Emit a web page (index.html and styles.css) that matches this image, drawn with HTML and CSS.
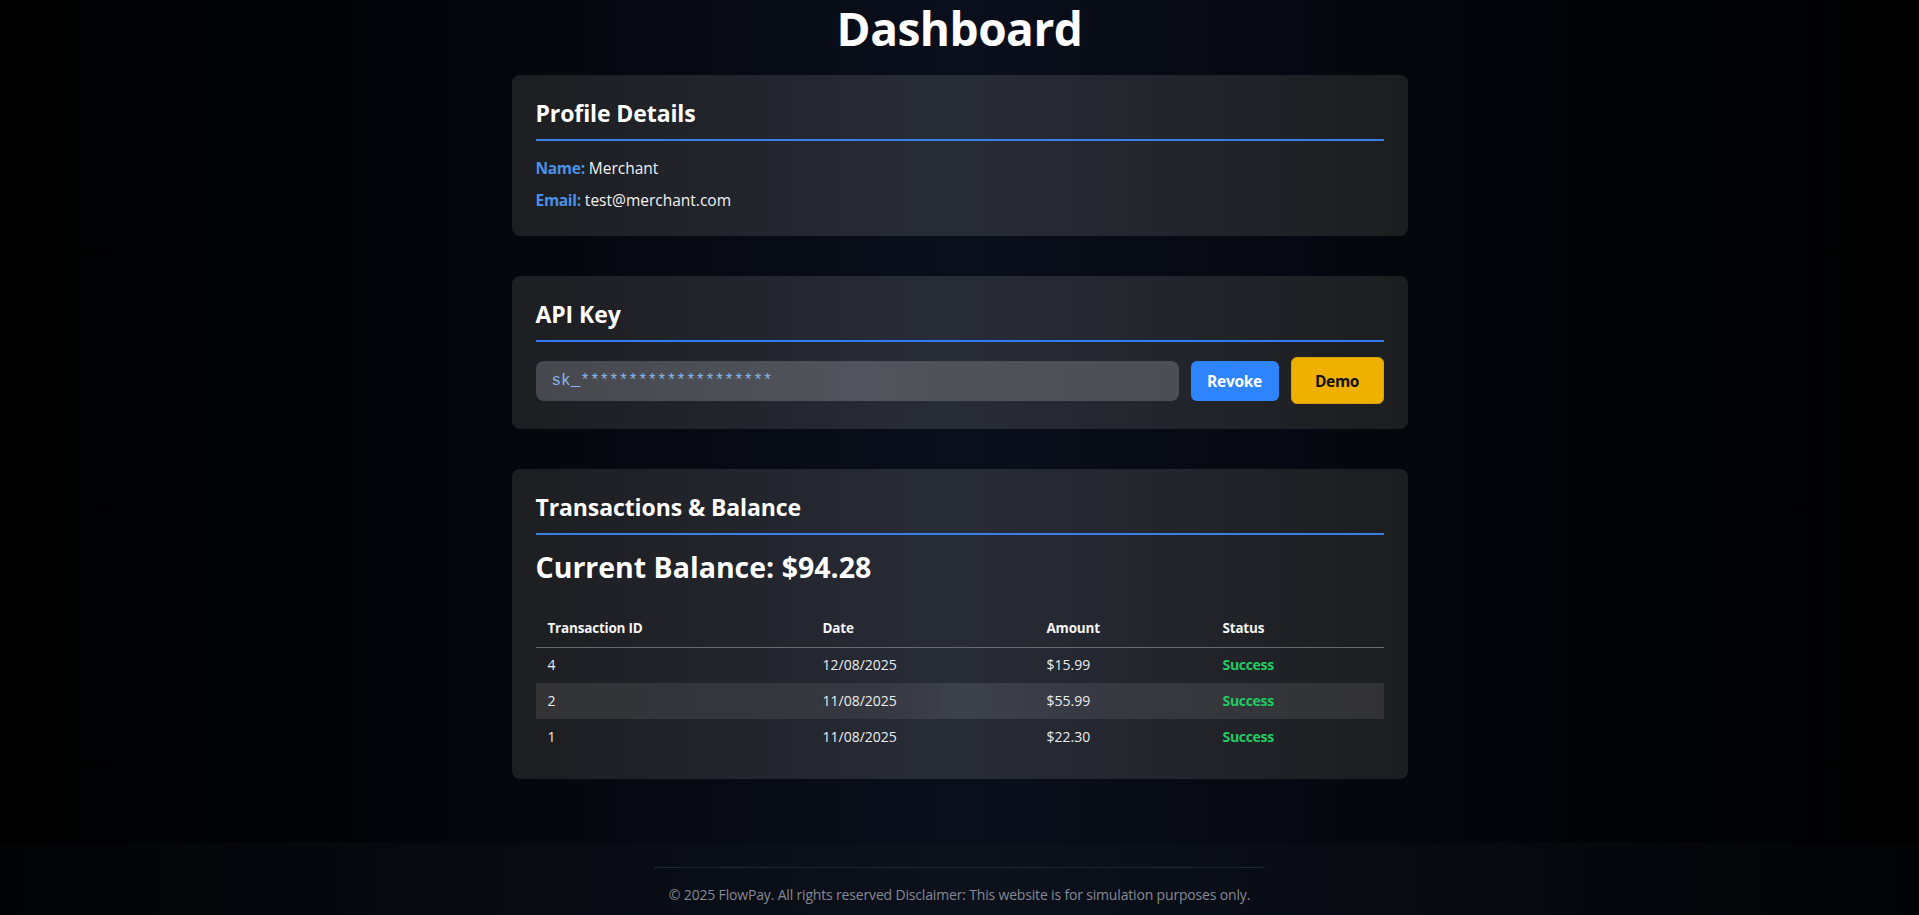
FILE: index.html
```html
<!DOCTYPE html>
<html lang="en">
<head>
<meta charset="utf-8">
<title>Dashboard</title>
<link rel="stylesheet" href="styles.css">
</head>
<body>
<main class="page">
  <h1 class="title">Dashboard</h1>

  <section class="card">
    <h2 class="card-title">Profile Details</h2>
    <p class="info"><span class="label">Name:</span> Merchant</p>
    <p class="info"><span class="label">Email:</span> test@merchant.com</p>
  </section>

  <section class="card card-key">
    <h2 class="card-title card-title-key">API Key</h2>
    <div class="key-row">
      <div class="key-input">sk_********************</div>
      <button class="btn btn-revoke">Revoke</button>
      <button class="btn btn-demo">Demo</button>
    </div>
  </section>

  <section class="card">
    <h2 class="card-title">Transactions &amp; Balance</h2>
    <h3 class="balance">Current Balance: $94.28</h3>
    <table class="tx-table">
      <colgroup>
        <col class="col-id"><col class="col-date"><col class="col-amount"><col class="col-status">
      </colgroup>
      <thead>
        <tr><th>Transaction ID</th><th>Date</th><th>Amount</th><th>Status</th></tr>
      </thead>
      <tbody>
        <tr><td>4</td><td>12/08/2025</td><td>$15.99</td><td class="status">Success</td></tr>
        <tr class="row-alt"><td>2</td><td>11/08/2025</td><td>$55.99</td><td class="status">Success</td></tr>
        <tr><td>1</td><td>11/08/2025</td><td>$22.30</td><td class="status">Success</td></tr>
      </tbody>
    </table>
  </section>
</main>
<footer class="footer">
  <div class="footer-inner">
    <p class="footer-text">© 2025 FlowPay. All rights reserved Disclaimer: This website is for simulation purposes only.</p>
  </div>
</footer>
</body>
</html>
```

FILE: styles.css
```css
* { box-sizing: border-box; }

html, body {
  margin: 0;
  padding: 0;
  height: 915px;
  overflow: hidden;
}

body {
  font-family: "Open Sans", "Noto Sans", sans-serif;
  color: #ffffff;
  background: linear-gradient(90deg, #000000 0%, #010205 15%, #0a0f1c 50%, #010205 85%, #000000 100%);
  display: flex;
  flex-direction: column;
}

.page {
  width: 896px;
  margin: 0 auto;
  display: flex;
  flex-direction: column;
  gap: 40px;
  flex: 0 0 843px;
}

.title {
  margin: 0 0 -21px 0;
  height: 56px;
  font-size: 46px;
  line-height: 56px;
  font-weight: 700;
  text-align: center;
  color: #ffffff;
  letter-spacing: -0.5px;
}

.card {
  background: linear-gradient(90deg, #1d1e21 0%, #23262e 30%, #282c37 48%, #23262d 70%, #1c1d1f 100%);
  border-radius: 8px;
  padding: 24px;
}

.card-key { padding-bottom: 25px; }

.card-title {
  margin: 0 0 15px 0;
  font-size: 23px;
  line-height: 28px;
  font-weight: 700;
  padding-bottom: 12px;
  border-bottom: 2px solid #3a7ee8;
  letter-spacing: -0.1px;
}

.card-title-key { margin-bottom: 15px; border-bottom-color: #2f7cf6; }

.info {
  margin: 0 0 8px 0;
  font-size: 15.5px;
  line-height: 24px;
  color: #f2f2f2;
}
.info:last-child { margin-bottom: 0; }

.label {
  color: #4a92e6;
  font-weight: 700;
  letter-spacing: -0.3px;
}

.key-row {
  display: flex;
  align-items: center;
  gap: 12px;
}

.key-input {
  flex: 1;
  height: 40px;
  border-radius: 8px;
  background: linear-gradient(90deg, #46484d 0%, #51545c 50%, #4c4e54 100%);
  color: #8ab6ec;
  font-family: "Liberation Mono", "DejaVu Sans Mono", monospace;
  font-size: 16px;
  line-height: 40px;
  padding: 0 16px;
  white-space: nowrap;
  overflow: hidden;
}

.btn {
  font-family: "Open Sans", "Noto Sans", sans-serif;
  font-weight: 700;
  font-size: 15.5px;
  border: none;
  border-radius: 6px;
  cursor: pointer;
  letter-spacing: -0.3px;
}

.btn-revoke {
  width: 88px;
  height: 40px;
  background: #2e84fd;
  color: #ffffff;
}

.btn-demo {
  width: 93px;
  height: 47px;
  background: #efb000;
  color: #111111;
  border: 1px solid #d9a102;
}

.balance {
  margin: 0 0 27px 0;
  font-size: 28.5px;
  line-height: 34px;
  font-weight: 700;
  letter-spacing: 0;
}

.tx-table {
  width: 100%;
  border-collapse: collapse;
  table-layout: fixed;
  font-size: 14px;
}

.col-id { width: 275px; }
.col-date { width: 224px; }
.col-amount { width: 176px; }
.col-status { width: 173px; }

.tx-table th {
  height: 36px;
  padding: 0 12px 2px 12px;
  text-align: left;
  font-size: 13.5px;
  font-weight: 700;
  color: #f4f4f4;
  border-bottom: 1px solid #6a6a6c;
  letter-spacing: -0.2px;
}

.tx-table td {
  height: 36px;
  padding: 0 12px 2px 12px;
  color: #ececec;
}

.row-alt {
  background: linear-gradient(90deg, #333335 0%, #353841 40%, #3d414c 50%, #373a42 65%, #323234 100%);
}

.tx-table td.status {
  color: #1fcc62;
  font-weight: 700;
  letter-spacing: -0.3px;
}

.footer {
  flex: 0 0 72px;
  background: linear-gradient(90deg, #020305 0%, #05070c 15%, #0c111c 50%, #05070c 85%, #020305 100%);
  display: flex;
  justify-content: center;
  padding-top: 24px;
}

.footer-inner {
  width: 611px;
  border-top: 1px solid #1f2633;
  display: flex;
  justify-content: center;
}

.footer-text {
  margin: 17px 0 0 0;
  font-size: 14px;
  line-height: 20px;
  color: #858a94;
  white-space: nowrap;
  letter-spacing: -0.17px;
}
```
